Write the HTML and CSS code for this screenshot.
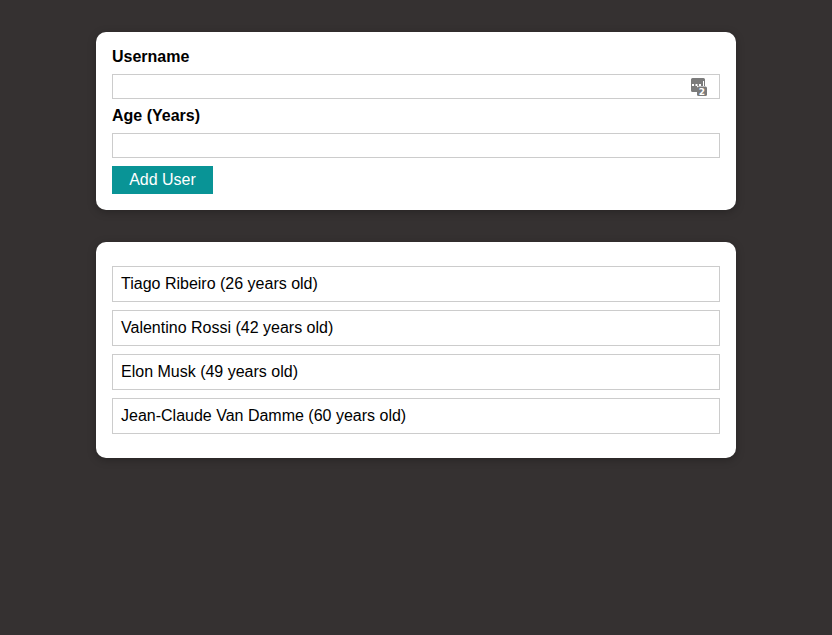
FILE: index.html
```html
<!DOCTYPE html>
<html lang="en">
<head>
<meta charset="utf-8">
<title>Users</title>
<link rel="stylesheet" href="styles.css">
</head>
<body>
<div class="card form-card">
  <form>
    <label for="username">Username</label>
    <div class="field">
      <input id="username" type="text">
      <svg class="manager" width="18" height="20" viewBox="0 0 18 20">
        <path fill="#7b7b7b" d="M2.5 1h11q1.5 0 1.5 1.5V9H7v6H2.5Q1 15 1 13.5v-11Q1 1 2.500 1z"/>
        <path fill="#fff" d="M2 7h2v2H2zM5.500 7h2v2h-2zM9 7h2v2H9zM13 4h1v5h-1z"/>
        <rect x="7" y="9.500" width="10" height="9.500" rx="1.500" fill="#7b7b7b"/>
        <text x="12" y="18" text-anchor="middle" class="count">2</text>
      </svg>
    </div>
    <label for="age">Age (Years)</label>
    <div class="field"><input id="age" type="text"></div>
    <button type="button">Add User</button>
  </form>
</div>
<div class="card users">
  <ul>
    <li>Tiago Ribeiro (26 years old)</li>
    <li>Valentino Rossi (42 years old)</li>
    <li>Elon Musk (49 years old)</li>
    <li>Jean-Claude Van Damme (60 years old)</li>
  </ul>
</div>
</body>
</html>
```
FILE: styles.css
```css
* { box-sizing: border-box; }
body { margin: 0; background: #353131; color: #000; font: 16px/18px "Liberation Sans", Arial, sans-serif; }
.card { width: 640px; margin: 32px auto; padding: 16px; background: #fff; border-radius: 10px; box-shadow: 0 2px 8px rgba(0, 0, 0, .26); }
.form-card { height: 178px; }
label { display: block; margin-bottom: 8px; font-weight: bold; }
.field { position: relative; height: 25px; margin-bottom: 8px; }
input { display: block; width: 100%; height: 25px; padding: 2px; border: 1px solid #ccc; font: inherit; }
.manager { position: absolute; top: 3px; right: 12px; }
.count { font: bold 9px "DejaVu Sans", sans-serif; fill: #fff; }
button { display: block; width: 101px; height: 28px; padding: 0; border: 1px solid #099496; background: #099496; color: #fff; font: inherit; }
ul { list-style: none; margin: 0; padding: 8px 0; display: flex; flex-direction: column; gap: 8px; }
li { height: 36px; padding: 8px; border: 1px solid #ccc; }
```
